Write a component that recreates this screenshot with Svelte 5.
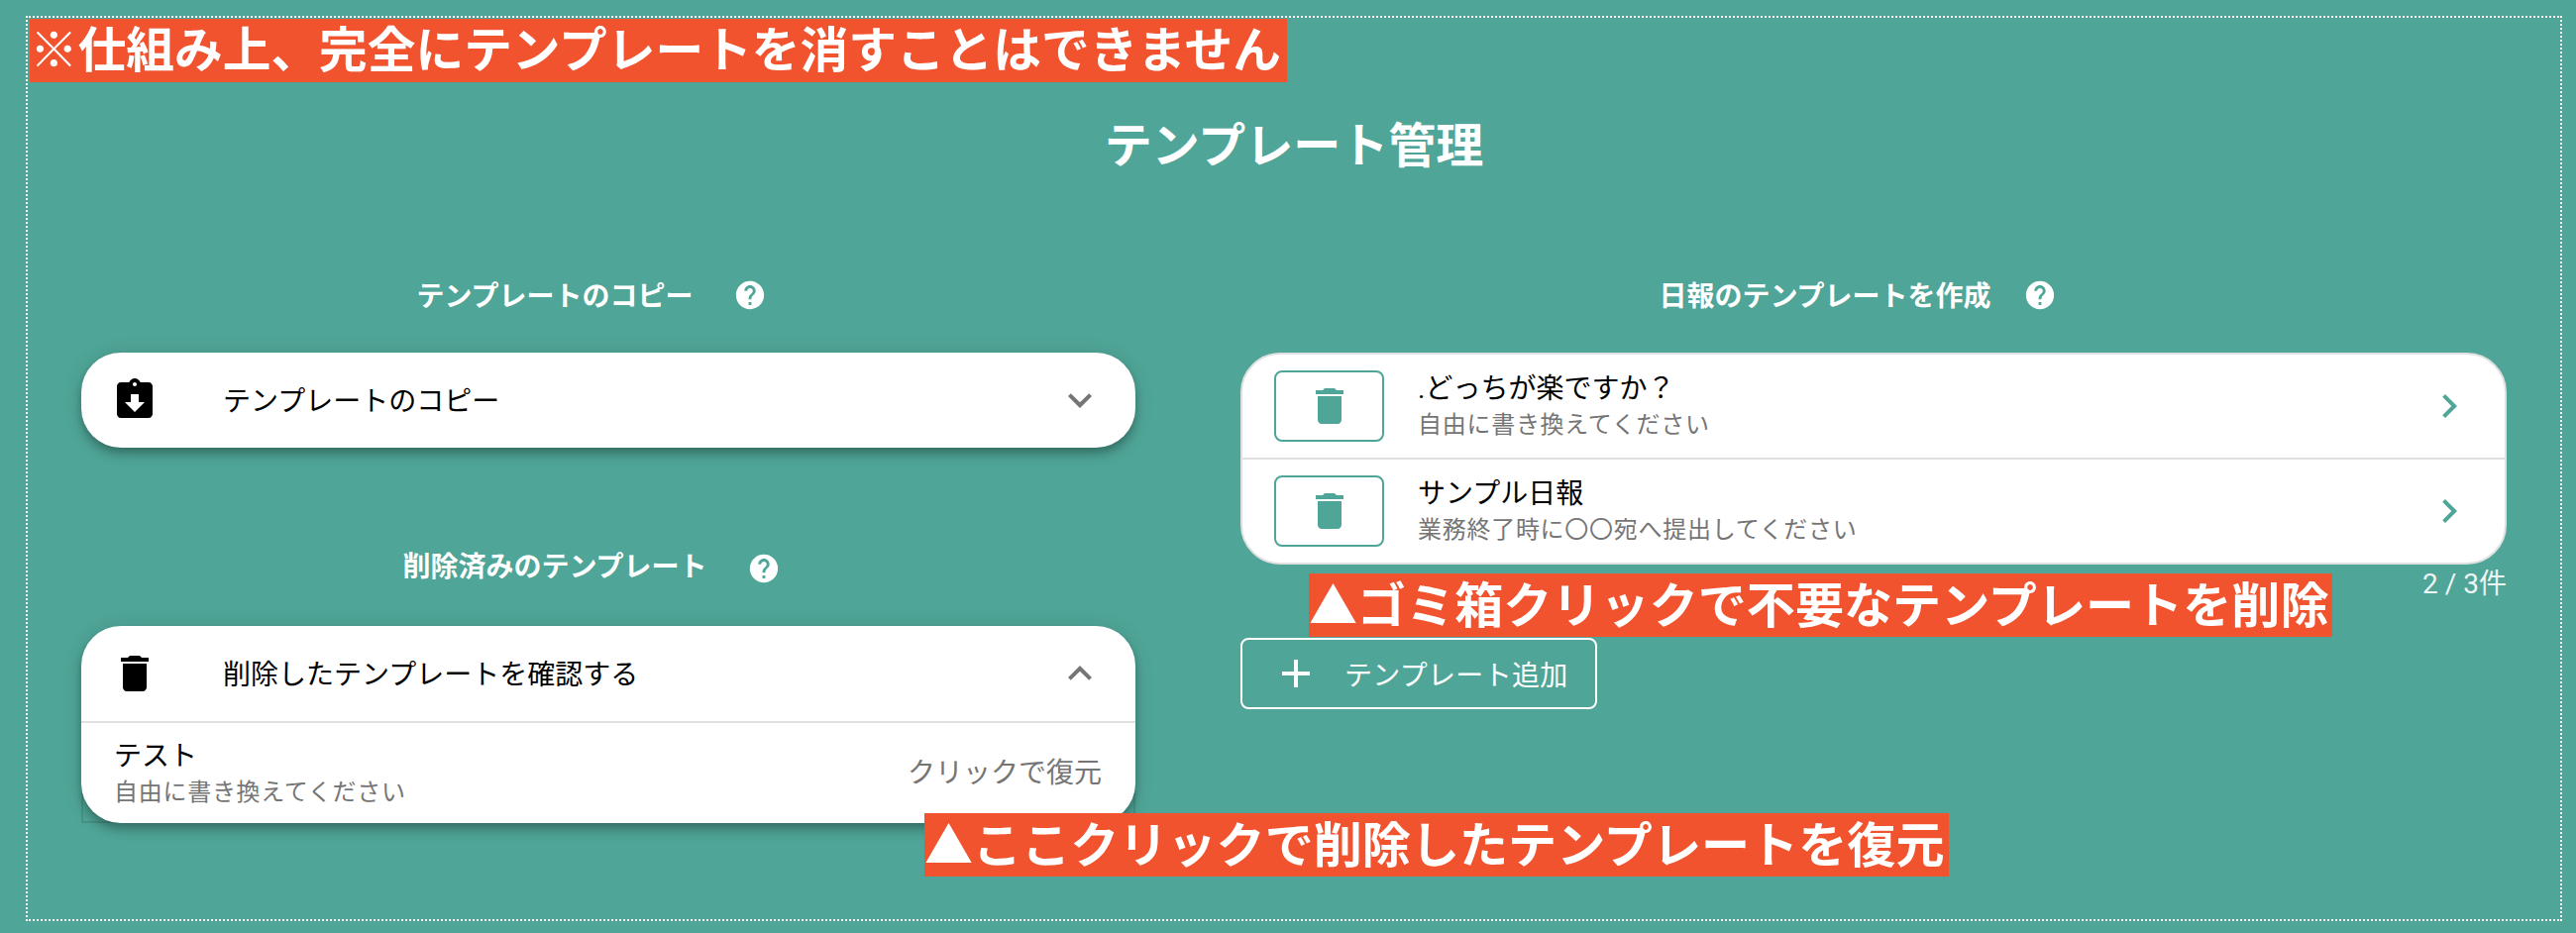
<script lang="ts">
  // template management screen, with the red annotation labels laid over it
  const trash = 'M6 19c0 1.1.9 2 2 2h8c1.1 0 2-.9 2-2V7H6v12zM19 4h-3.5l-1-1h-5l-1 1H5v2h14V4z';
  const templates = [
    { title: '.どっちが楽ですか？', sub: '自由に書き換えてください' },
    { title: 'サンプル日報', sub: '業務終了時に〇〇宛へ提出してください' }
  ];
</script>

{#snippet help()}
  <svg class="help" viewBox="0 0 24 24" width="34" height="34"><path fill="#fff" d="M12 2C6.48 2 2 6.48 2 12s4.48 10 10 10 10-4.48 10-10S17.52 2 12 2zm1 17h-2v-2h2v2zm2.07-7.75l-.9.92C13.45 12.9 13 13.5 13 15h-2v-.5c0-1.1.45-2.1 1.17-2.83l1.24-1.26c.37-.36.59-.86.59-1.41 0-1.1-.9-2-2-2s-2 .9-2 2H8c0-2.21 1.79-4 4-4s4 1.79 4 4c0 .88-.36 1.68-.93 2.25z"/></svg>
{/snippet}

{#snippet icon(d: string, cls: string)}
  <svg class={cls} viewBox="0 0 24 24" width="48" height="48"><path fill="currentColor" {d}/></svg>
{/snippet}

<div class="page">
  <div class="frame">
    <div class="note note-top">※仕組み上、完全にテンプレートを消すことはできません</div>
    <h1>テンプレート管理</h1>

    <div class="cols">
      <div class="col">
        <div class="head head-copy"><span>テンプレートのコピー</span>{@render help()}</div>
        <div class="card shadow copy">
          <div class="bar">
            {@render icon('M19 3h-4.18C14.4 1.84 13.3 1 12 1c-1.3 0-2.4.84-2.82 2H5c-1.1 0-2 .9-2 2v14c0 1.1.9 2 2 2h14c1.1 0 2-.9 2-2V5c0-1.1-.9-2-2-2zm-7 0c.55 0 1 .45 1 1s-.45 1-1 1-1-.45-1-1 .45-1 1-1zm0 15l-5-5h3V9h4v4h3l-5 5z', 'lead')}
            <span class="bar-label">テンプレートのコピー</span>
            {@render icon('M16.59 8.59L12 13.17 7.41 8.59 6 10l6 6 6-6z', 'chev')}
          </div>
        </div>

        <div class="head head-deleted"><span>削除済みのテンプレート</span>{@render help()}</div>
        <div class="panel">
          <div class="card shadow">
            <div class="bar open">
              {@render icon(trash, 'lead')}
              <span class="bar-label">削除したテンプレートを確認する</span>
              {@render icon('M12 8l-6 6 1.41 1.41L12 10.83l4.59 4.58L18 14z', 'chev')}
            </div>
            <div class="deleted">
              <div>
                <div class="t">テスト</div>
                <div class="s">自由に書き換えてください</div>
              </div>
              <span class="restore">クリックで復元</span>
            </div>
          </div>
        </div>
      </div>

      <div class="col">
        <div class="head head-new"><span>日報のテンプレートを作成</span>{@render help()}</div>
        <div class="card list">
          {#each templates as item}
            <div class="row">
              <div class="del">{@render icon(trash, 'teal')}</div>
              <div class="texts">
                <div class="t">{item.title}</div>
                <div class="s">{item.sub}</div>
              </div>
              {@render icon('M10 6L8.59 7.41 13.17 12l-4.58 4.59L10 18l6-6z', 'teal')}
            </div>
          {/each}
        </div>
        <div class="count">2 / 3件</div>
        <div class="add">
          <svg viewBox="0 0 24 24" width="48" height="48"><path fill="#fff" d="M19 13h-6v6h-2v-6H5v-2h6V5h2v6h6v2z"/></svg>
          <span>テンプレート追加</span>
        </div>
      </div>
    </div>

    <div class="note note-trash">▲ゴミ箱クリックで不要なテンプレートを削除</div>
    <div class="note note-restore">▲ここクリックで削除したテンプレートを復元</div>
  </div>
</div>

<style>
  :global(body) { margin: 0; }
  .page {
    width: 2600px;
    height: 942px;
    box-sizing: border-box;
    padding: 16px 14px 12px 26px;
    background: #4fa597;
    font-family: Roboto, "Noto Sans CJK JP", sans-serif;
    overflow: hidden;
  }
  .frame {
    position: relative;
    box-sizing: border-box;
    height: 100%;
    border: 2px dotted #fff;
  }
  h1 {
    margin: 0;
    padding-top: 102px;
    font-size: 48px;
    line-height: 56px;
    font-weight: 700;
    color: #fff;
    text-align: center;
  }
  .cols {
    display: grid;
    grid-template-columns: 1064px 1278px;
    column-gap: 106px;
    margin-top: 101px;
    padding-left: 54px;
  }
  .head {
    display: flex;
    justify-content: center;
    align-items: center;
    height: 40px;
    color: #fff;
    font-size: 28px;
    font-weight: 700;
  }
  .help { margin: 2px 0 0 40px; }
  .head-copy { margin-bottom: 39px; padding-right: 34px; }
  .head-deleted { margin-top: 98px; margin-bottom: 42px; padding-right: 34px; }
  .head-deleted .help { margin-top: 8px; }
  .head-new { margin-bottom: 39px; padding-right: 32px; }
  .head-new .help { margin-left: 32px; }
  .card {
    background: #fff;
    border-radius: 40px;
    overflow: hidden;
    color: #000;
  }
  .shadow {
    box-shadow: 0 4px 8px -2px rgba(0, 0, 0, .2), 0 8px 10px rgba(0, 0, 0, .14), 0 2px 20px rgba(0, 0, 0, .12);
  }
  /* the square-cornered box that shows behind the rounded bottom of the panel */
  .panel { position: relative; isolation: isolate; }
  .panel::before {
    content: "";
    position: absolute;
    z-index: -1;
    left: 0;
    right: 0;
    bottom: 0;
    height: 80px;
    box-sizing: border-box;
    border: 2px solid rgba(0, 0, 0, .1);
    border-top: 0;
  }
  .bar {
    display: flex;
    align-items: center;
    height: 96px;
    padding: 0 32px 0 30px;
    box-sizing: border-box;
  }
  .bar.open { height: 98px; border-bottom: 2px solid #e0e0e0; }
  .bar-label { flex: 1; margin-left: 65px; padding-bottom: 3px; font-size: 28px; }
  .chev { color: #757575; }
  .deleted {
    display: flex;
    align-items: center;
    justify-content: space-between;
    height: 101px;
    padding: 0 34px 0 33px;
  }
  .t { font-size: 28px; line-height: 38px; }
  .s { font-size: 24px; line-height: 34px; letter-spacing: .72px; color: #757575; }
  .restore { padding-bottom: 6px; font-size: 28px; color: #757575; }
  .list { border: 2px solid #e0e0e0; }
  .row {
    display: flex;
    align-items: center;
    height: 104px;
    padding: 0 32px;
  }
  .row + .row { border-top: 2px solid #e0e0e0; }
  .del {
    box-sizing: border-box;
    display: flex;
    align-items: center;
    justify-content: center;
    width: 111px;
    height: 72px;
    border: 2px solid #4fa597;
    border-radius: 8px;
  }
  .texts { flex: 1; margin-left: 34px; }
  .teal { color: #4fa597; }
  .count {
    text-align: right;
    color: #fff;
    opacity: .9;
    font-size: 28px;
    line-height: 40px;
  }
  .add {
    box-sizing: border-box;
    display: flex;
    align-items: center;
    width: 360px;
    height: 72px;
    margin-top: 34px;
    padding-left: 30px;
    border: 2px solid #fff;
    border-radius: 8px;
    color: #fff;
    font-size: 28px;
  }
  .add span { margin-left: 25px; letter-spacing: .3px; }
  .note {
    position: absolute;
    z-index: 2;
    height: 64px;
    line-height: 66px;
    background: #f0532e;
    color: #fff;
    font-size: 49.1px;
    font-weight: 700;
    white-space: nowrap;
    overflow: hidden;
  }
  .note-top { left: 2px; top: 1px; width: 1269px; font-size: 48.7px; }
  .note-trash { left: 1293px; top: 561px; width: 1033px; }
  .note-restore { left: 905px; top: 803px; width: 1034px; }
</style>
